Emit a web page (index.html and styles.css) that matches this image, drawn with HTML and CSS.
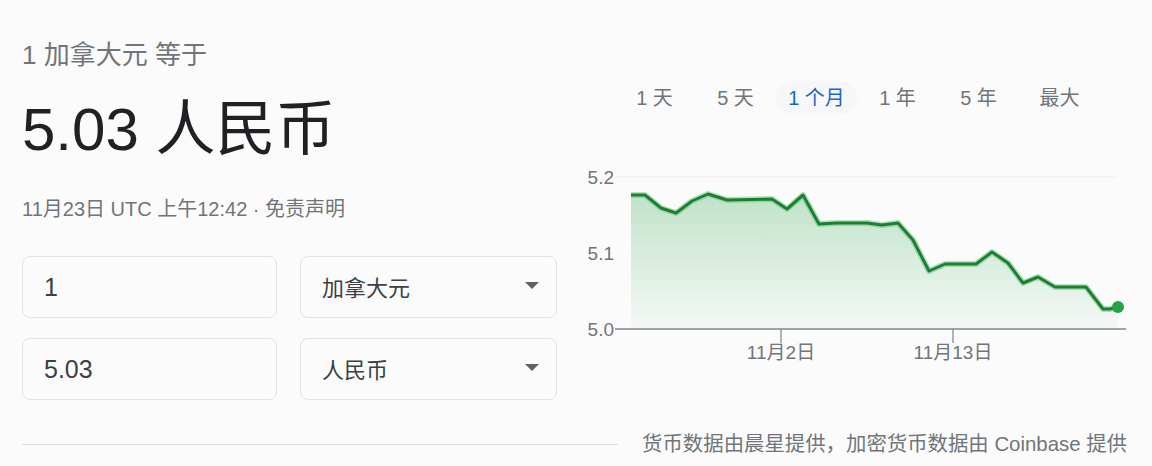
FILE: index.html
```html
<!DOCTYPE html>
<html lang="zh-CN">
<head>
<meta charset="utf-8">
<title>加拿大元 人民币</title>
<link rel="stylesheet" href="styles.css">
</head>
<body>
<main class="card">
  <div class="top">
    <section class="left">
      <div class="title">1 加拿大元 等于</div>
      <div class="value">5.03 人民币</div>
      <div class="meta">11月23日 UTC 上午12:42 · 免责声明</div>
      <div class="row">
        <div class="field">1</div>
        <div class="select"><span>加拿大元</span><span class="arrow"></span></div>
      </div>
      <div class="row">
        <div class="field">5.03</div>
        <div class="select"><span>人民币</span><span class="arrow"></span></div>
      </div>
    </section>
    <section class="right">
      <div class="tabs">
        <span class="tab">1 天</span>
        <span class="tab">5 天</span>
        <span class="tab active">1 个月</span>
        <span class="tab">1 年</span>
        <span class="tab">5 年</span>
        <span class="tab">最大</span>
      </div>
      <svg class="chart" width="560" height="210" viewBox="0 0 560 210">
        <defs>
          <linearGradient id="fillg" x1="0" y1="0" x2="0" y2="1">
            <stop offset="0" stop-color="#34a853" stop-opacity="0.30"/>
            <stop offset="1" stop-color="#34a853" stop-opacity="0.03"/>
          </linearGradient>
        </defs>
        <line x1="35" y1="17" x2="538" y2="17" stroke="#ececec" stroke-width="1"/>
        <text class="ylab" x="34" y="24" text-anchor="end">5.2</text>
        <text class="ylab" x="34" y="100" text-anchor="end">5.1</text>
        <text class="ylab" x="34" y="176" text-anchor="end">5.0</text>
        <path d="M51,35 L65,35 L81,48 L96,53 L112,41 L128,34 L147,40 L192,39 L207,49 L223,35 L239,64 L257,63 L287,63 L302,65 L318,63 L333,80 L349,111 L365,104 L396,104 L412,92 L428,103 L443,123 L458,117 L475,127 L506,127 L523,149 L530,149 L538,147 L538,169 L51,169 Z" fill="url(#fillg)"/>
        <path d="M51,35 L65,35 L81,48 L96,53 L112,41 L128,34 L147,40 L192,39 L207,49 L223,35 L239,64 L257,63 L287,63 L302,65 L318,63 L333,80 L349,111 L365,104 L396,104 L412,92 L428,103 L443,123 L458,117 L475,127 L506,127 L523,149 L530,149 L538,147" fill="none" stroke="#5cc072" stroke-opacity="0.45" stroke-width="6" stroke-linejoin="round"/>
        <path d="M51,35 L65,35 L81,48 L96,53 L112,41 L128,34 L147,40 L192,39 L207,49 L223,35 L239,64 L257,63 L287,63 L302,65 L318,63 L333,80 L349,111 L365,104 L396,104 L412,92 L428,103 L443,123 L458,117 L475,127 L506,127 L523,149 L530,149 L538,147" fill="none" stroke="#1e7e34" stroke-width="3" stroke-linejoin="round"/>
        <line x1="35" y1="169" x2="546" y2="169" stroke="#80868b" stroke-width="1.5"/>
        <line x1="201" y1="169" x2="201" y2="183" stroke="#80868b" stroke-width="1.2"/>
        <line x1="373" y1="169" x2="373" y2="183" stroke="#80868b" stroke-width="1.2"/>
        <text class="xlab" x="201" y="199" text-anchor="middle">11月2日</text>
        <text class="xlab" x="373" y="199" text-anchor="middle">11月13日</text>
        <circle cx="538" cy="147" r="6" fill="#25a244"/>
      </svg>
    </section>
  </div>
  <footer class="foot">
    <span class="rule"></span>
    <span class="attrib">货币数据由晨星提供，加密货币数据由 Coinbase 提供</span>
  </footer>
</main>
</body>
</html>
```
FILE: styles.css
```css
html, body {
  margin: 0;
  padding: 0;
  background: #fbfbfb;
}
body {
  width: 1152px;
  height: 466px;
  overflow: hidden;
  font-family: "Liberation Sans", Arial, "Noto Sans CJK SC", sans-serif;
  color: #202124;
}
.card {
  display: flex;
  flex-direction: column;
}
.top {
  display: flex;
  height: 400px;
}
.left {
  width: 580px;
  flex: none;
  box-sizing: border-box;
  padding: 39px 0 0 22px;
  display: flex;
  flex-direction: column;
}
.title {
  font-size: 26px;
  line-height: 32px;
  color: #70757a;
}
.value {
  margin-top: 25px;
  font-size: 60px;
  line-height: 68px;
  color: #202124;
}
.meta {
  margin-top: 33px;
  font-size: 20px;
  line-height: 24px;
  color: #70757a;
}
.row {
  display: flex;
  gap: 23px;
  margin-top: 20px;
}
.meta + .row {
  margin-top: 35px;
}
.field, .select {
  box-sizing: border-box;
  height: 62px;
  border: 1px solid #e0e2e5;
  border-radius: 8px;
  display: flex;
  align-items: center;
  padding-left: 21px;
  color: #3c4043;
}
.field {
  width: 255px;
  font-size: 25px;
}
.select {
  width: 257px;
  font-size: 22px;
  justify-content: space-between;
  padding-right: 17px;
  padding-bottom: 3px;
}
.arrow {
  width: 0;
  height: 0;
  border-left: 7px solid transparent;
  border-right: 7px solid transparent;
  border-top: 7px solid #5f6368;
}
.right {
  width: 572px;
  flex: none;
  display: flex;
  flex-direction: column;
}
.tabs {
  display: flex;
  margin: 81px 0 0 34px;
}
.tab {
  width: 81px;
  height: 34px;
  line-height: 34px;
  text-align: center;
  font-size: 20px;
  color: #70757a;
  border-radius: 17px;
}
.tab.active {
  color: #1a66c9;
  background: #f6f7f9;
}
.chart {
  display: block;
  margin-top: 45px;
}
.ylab, .xlab {
  font-family: "Liberation Sans", Arial, "Noto Sans CJK SC", sans-serif;
  font-size: 19px;
  fill: #70757a;
}
.foot {
  display: flex;
  align-items: center;
  margin-top: 32px;
  padding-left: 22px;
  gap: 24px;
  height: 24px;
}
.rule {
  flex: 1;
  height: 1px;
  background: #dadce0;
}
.attrib {
  font-size: 20.4px;
  line-height: 24px;
  color: #70757a;
  margin-right: 25px;
  white-space: nowrap;
}
```
